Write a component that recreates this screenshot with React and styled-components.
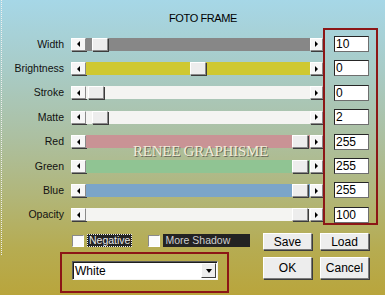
import React from 'react';
import styled, { createGlobalStyle, css } from 'styled-components';

const Global = createGlobalStyle`
  html, body { margin: 0; padding: 0; }
  body {
    width: 385px;
    height: 295px;
    overflow: hidden;
    font-family: "Liberation Sans", Arial, sans-serif;
  }
`;

const RED = '#8c1616';

const raised = css`
  box-sizing: border-box;
  background: #ededed;
  border-style: solid;
  border-width: 1px;
  border-color: #ffffff #8a8a8a #8a8a8a #ffffff;
  box-shadow: 1px 1px 0 #3c3c3c;
`;

const sunken = css`
  box-sizing: border-box;
  background: #ffffff;
  border-style: solid;
  border-width: 1px;
  border-color: #262626 #6e6e6e #6e6e6e #262626;
`;

const Page = styled.div`
  position: relative;
  width: 385px;
  height: 295px;
  box-sizing: border-box;
  display: flex;
  flex-direction: column;
  color: #000;
  font-family: "Liberation Sans", Arial, sans-serif;
  background:
    repeating-linear-gradient(to bottom, #efefef 0 1px, transparent 1px 2px) 1px 0 / 1px 256px no-repeat,
    linear-gradient(to bottom, #a6d7e7 0%, #a8cbc6 24%, #acc0a2 46%, #b1b67a 66%, #b6ac52 84%, #b9a53c 100%);
`;

const Title = styled.div`
  height: 28px;
  box-sizing: border-box;
  padding: 12px 0 0 21px;
  text-align: center;
  font-size: 11px;
  line-height: 13px;
  letter-spacing: -0.4px;
`;

const Upper = styled.div`
  display: flex;
  align-items: flex-start;
  height: 197px;
`;

const SliderList = styled.div`
  width: 323px;
  padding-top: 4px;
  display: flex;
  flex-direction: column;
`;

const Row = styled.div`
  height: 24.4px;
  display: grid;
  grid-template-columns: 71px 252px;
  align-items: center;
`;

const Label = styled.span`
  padding-right: 7px;
  text-align: right;
  font-size: 10.5px;
  line-height: 13px;
  color: #111;
`;

const Slider = styled.div`
  display: flex;
  height: 13px;
`;

const Arrow = styled.div`
  ${raised};
  width: ${p => p.$w}px;
  height: 13px;
  flex: none;
  display: flex;
  align-items: center;
  justify-content: center;
  background: #f6f6f6;
`;

const TriLeft = styled.span`
  width: 0;
  height: 0;
  border-top: 3px solid transparent;
  border-bottom: 3px solid transparent;
  border-right: 3px solid #000;
`;

const TriRight = styled.span`
  width: 0;
  height: 0;
  border-top: 3px solid transparent;
  border-bottom: 3px solid transparent;
  border-left: 3px solid #000;
`;

const Track = styled.div`
  flex: 1;
  display: flex;
  background: ${p => p.$color};
`;

const Thumb = styled.div`
  ${raised};
  width: 16px;
  height: 13px;
  flex: none;
  margin-left: ${p => p.$pos}px;
`;

const ValuesBox = styled.div`
  width: 55px;
  height: 197px;
  box-sizing: border-box;
  border: 2px solid ${RED};
  padding: 6px 0 0 9px;
  display: flex;
  flex-direction: column;
  gap: 8.4px;
`;

const ValueField = styled.div`
  ${sunken};
  width: 35px;
  height: 16px;
  padding-left: 1px;
  font-size: 12px;
  line-height: 14px;
`;

const Watermark = styled.div`
  position: absolute;
  left: 133px;
  top: 144px;
  font-family: "Liberation Serif", "Times New Roman", serif;
  font-size: 15px;
  line-height: 15px;
  letter-spacing: -0.25px;
  color: #f1ebd9;
  text-shadow: 1px 1px 0 #6a6a58;
  white-space: nowrap;
  pointer-events: none;
`;

const Lower = styled.div`
  display: flex;
  align-items: flex-start;
`;

const LeftCol = styled.div`
  margin-left: 60px;
  width: 169px;
  flex: none;
  display: flex;
  flex-direction: column;
`;

const CheckRow = styled.div`
  margin-top: 9px;
  padding-left: 12px;
  height: 13px;
  display: flex;
  align-items: center;
  white-space: nowrap;
`;

const CheckBox = styled.span`
  box-sizing: border-box;
  width: 12px;
  height: 12px;
  flex: none;
  background: #fbfbfb;
  border-style: solid;
  border-width: 1px;
  border-color: #8a8a8a #ffffff #ffffff #8a8a8a;
  margin-right: ${p => p.$gap}px;
`;

const CheckLabel = styled.span`
  box-sizing: border-box;
  flex: none;
  height: 13px;
  line-height: 12px;
  padding: 0 2px;
  font-size: 10.5px;
  background: #232323;
  color: ${p => (p.$focus ? '#e8e8e8' : '#cfcfcf')};
  outline: ${p => (p.$focus ? '1px dotted #f0f0f0' : 'none')};
  outline-offset: -1px;
  width: ${p => (p.$w ? `${p.$w}px` : 'auto')};
  margin-right: ${p => p.$after || 0}px;
`;

const DropBox = styled.div`
  margin-top: 5px;
  width: 169px;
  height: 41px;
  box-sizing: border-box;
  border: 2px solid ${RED};
  padding: 7px 0 0 10px;
`;

const Select = styled.div`
  box-sizing: border-box;
  width: 146px;
  height: 19px;
  background: #fff;
  border-style: solid;
  border-width: 1px;
  border-color: #5a5a5a #f4f4f0 #f4f4f0 #5a5a5a;
  box-shadow: inset 1px 1px 0 #1e1e1e;
  display: flex;
  align-items: center;
  justify-content: space-between;
  padding: 1px 1px 1px 2px;
  font-size: 12px;
`;

const DropBtn = styled.div`
  ${raised};
  width: 15px;
  height: 15px;
  box-shadow: none;
  border-color: #ffffff #404040 #404040 #ffffff;
  display: flex;
  align-items: center;
  justify-content: center;
`;

const TriDown = styled.span`
  width: 0;
  height: 0;
  border-left: 3.5px solid transparent;
  border-right: 3.5px solid transparent;
  border-top: 4px solid #000;
`;

const Buttons = styled.div`
  margin: 8px 0 0 34px;
  display: grid;
  grid-template-columns: 49px 49px;
  grid-template-rows: 17px 22px;
  column-gap: 8px;
  row-gap: 7px;
`;

const Button = styled.div`
  ${raised};
  border-color: #ffffff #7a7a7a #7a7a7a #ffffff;
  display: flex;
  align-items: center;
  justify-content: center;
  font-size: 12px;
  color: #000;
`;

const rows = [
  { label: 'Width', color: '#878787', pos: 5, value: '10' },
  { label: 'Brightness', color: '#cfc831', pos: 103, value: '0' },
  { label: 'Stroke', color: '#f4f4f2', pos: 1, value: '0' },
  { label: 'Matte', color: '#f4f4f2', pos: 5, value: '2' },
  { label: 'Red', color: '#c99395', pos: 205, value: '255' },
  { label: 'Green', color: '#90c493', pos: 205, value: '255' },
  { label: 'Blue', color: '#7ba5c9', pos: 205, value: '255' },
  { label: 'Opacity', color: '#f4f4f2', pos: 205, value: '100' },
];

export default function App() {
  return (
    <>
      <Global />
      <Page>
        <Title>FOTO FRAME</Title>
        <Upper>
          <SliderList>
            {rows.map(r => (
              <Row key={r.label}>
                <Label>{r.label}</Label>
                <Slider>
                  <Arrow $w={15}><TriLeft /></Arrow>
                  <Track $color={r.color}>
                    <Thumb $pos={r.pos + 1} />
                  </Track>
                  <Arrow $w={13}><TriRight /></Arrow>
                </Slider>
              </Row>
            ))}
          </SliderList>
          <ValuesBox>
            {rows.map(r => (
              <ValueField key={r.label}>{r.value}</ValueField>
            ))}
          </ValuesBox>
        </Upper>
        <Lower>
          <LeftCol>
            <CheckRow>
              <CheckBox $gap={3} />
              <CheckLabel $focus $after={16}>Negative</CheckLabel>
              <CheckBox $gap={3} />
              <CheckLabel $w={87}>More Shadow</CheckLabel>
            </CheckRow>
            <DropBox>
              <Select>
                <span>White</span>
                <DropBtn><TriDown /></DropBtn>
              </Select>
            </DropBox>
          </LeftCol>
          <Buttons>
            <Button>Save</Button>
            <Button>Load</Button>
            <Button>OK</Button>
            <Button>Cancel</Button>
          </Buttons>
        </Lower>
        <Watermark>RENEE GRAPHISME</Watermark>
      </Page>
    </>
  );
}
